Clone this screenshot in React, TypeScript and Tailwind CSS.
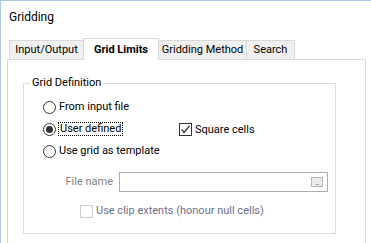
import React from 'react';

const font = { fontFamily: 'Roboto, "Liberation Sans", sans-serif' };

const Radio = ({ checked }: { checked?: boolean }) => (
    <span className="w-[13px] h-[13px] rounded-full border border-[#333333] bg-white flex items-center justify-center shrink-0">
        {checked && <span className="w-[7px] h-[7px] rounded-full bg-[#333333]"></span>}
    </span>
);

const Check = ({ checked, disabled }: { checked?: boolean; disabled?: boolean }) => (
    <span className={`w-[13px] h-[13px] border ${disabled ? 'border-[#cccccc]' : 'border-[#333333]'} bg-white flex items-center justify-center shrink-0`}>
        {checked && (
            <svg width="11" height="11" viewBox="0 0 11 11">
                <polyline points="1.5,5.5 4,8.5 9.5,2" fill="none" stroke="#333333" strokeWidth="1.2" />
            </svg>
        )}
    </span>
);

export default function App() {
    return (
        <div className="w-[371px] h-[243px] bg-white overflow-hidden border-l border-t border-[#a6cbee] text-[11px] text-black leading-[16px]" style={font}>
            <div className="h-[37px] pl-[8px] pt-[8px] text-[12px]">Gridding</div>
            <div className="pl-[6px]">
                {/* tabs */}
                <div className="flex pl-[2px] items-start">
                    <div className="w-[75px] h-[19px] mt-[2px] bg-[#f0f0f0] border border-b-0 border-[#d9d9d9] flex items-center justify-center">Input/Output</div>
                    <div className="w-[76px] h-[22px] -ml-px bg-white border border-b-0 border-[#d9d9d9] flex items-center justify-center font-bold relative z-10 -mb-px">Grid Limits</div>
                    <div className="w-[89px] h-[19px] mt-[2px] -ml-px bg-[#f0f0f0] border border-b-0 border-[#d9d9d9] flex items-center justify-center">Gridding Method</div>
                    <div className="w-[49px] h-[19px] mt-[2px] -ml-px bg-[#f0f0f0] border border-b-0 border-[#d9d9d9] flex items-center justify-center">Search</div>
                </div>
                <div className="w-[359px] h-[200px] border border-[#d9d9d9] pl-[15px] pt-[23px]">
                    {/* group box */}
                    <div className="w-[313px] h-[151px] border border-[#dcdcdc]">
                        <div className="-mt-[9px] ml-[6px] px-[2px] bg-white w-fit">Grid Definition</div>
                        <div className="flex flex-col mt-[5px] pl-[19px]">
                            <div className="h-[22px] flex items-center gap-[3px]">
                                <Radio />
                                <span>From input file</span>
                            </div>
                            <div className="h-[22px] flex items-center">
                                <div className="flex items-center gap-[2px] w-[136px]">
                                    <Radio checked />
                                    <span className="border border-dotted border-black px-[1px] leading-[12px] h-[14px]">User defined</span>
                                </div>
                                <div className="flex items-center gap-[3px] mt-[1px]">
                                    <Check checked />
                                    <span>Square cells</span>
                                </div>
                            </div>
                            <div className="h-[22px] flex items-center gap-[3px]">
                                <Radio />
                                <span>Use grid as template</span>
                            </div>
                            <div className="h-[20px] mt-[10px] flex items-center">
                                <span className="w-[76px] text-right pr-[6px] text-[#838383]">File name</span>
                                <div className="w-[209px] h-[20px] border border-[#adadad] bg-white flex items-center justify-end pr-[4px]">
                                    <span className="w-[12px] h-[10px] border border-[#b5b5b5] bg-[#ececec] flex items-end justify-center text-[8px] leading-[6px] text-[#777777] tracking-[-1px]">...</span>
                                </div>
                            </div>
                            <div className="h-[20px] mt-[9px] flex items-center gap-[3px] pl-[37px]">
                                <Check disabled />
                                <span className="text-[#6d6d8d]">Use clip extents (honour null cells)</span>
                            </div>
                        </div>
                    </div>
                </div>
            </div>
        </div>
    );
}
